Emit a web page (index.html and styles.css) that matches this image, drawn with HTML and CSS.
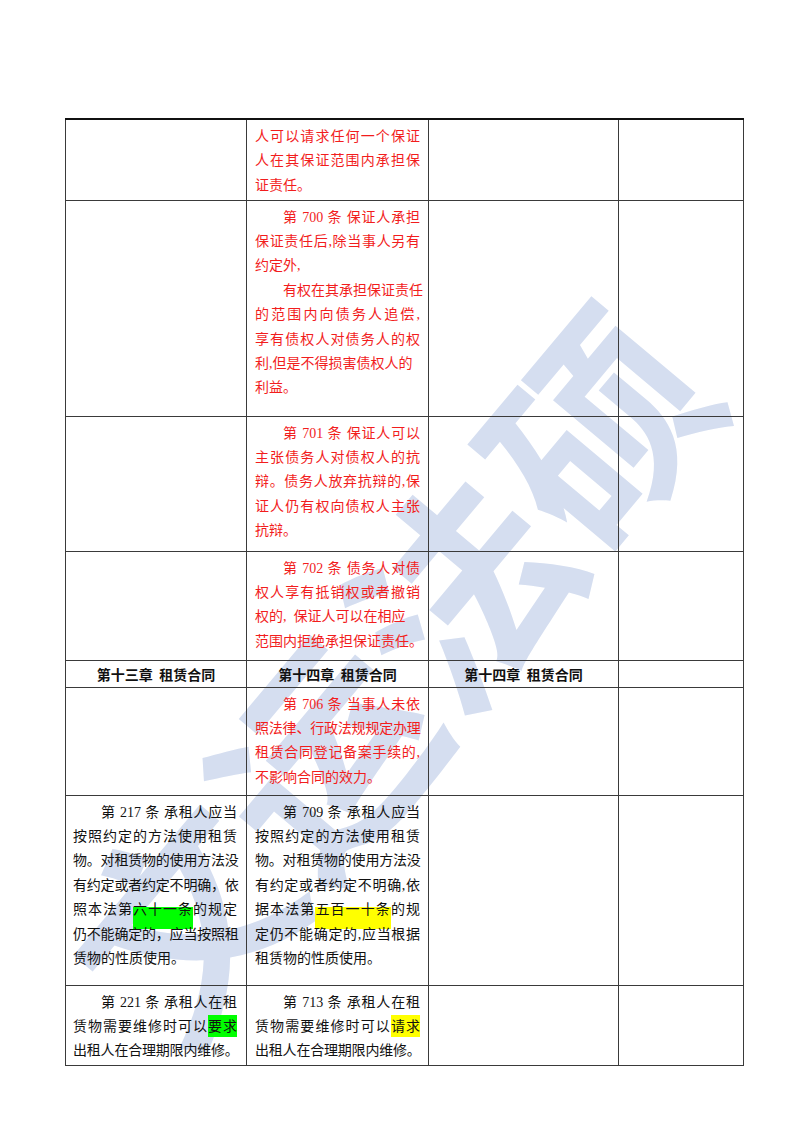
FILE: index.html
```html
<!DOCTYPE html>
<html lang="zh-CN">
<head>
<meta charset="utf-8">
<title>租赁合同对照表</title>
<link rel="stylesheet" href="styles.css">
</head>
<body>
<div class="page">
  <div class="watermark"><span>文</span><span>运</span><span>法</span><span>硕</span></div>
  <table class="cmp">
    <colgroup><col class="c1"><col class="c2"><col class="c3"><col class="c4"></colgroup>
    <tr class="r1">
      <td></td>
      <td class="red">
        <span class="ln">人可以请求任何一个保证</span>
        <span class="ln">人在其保证范围内承担保</span>
        <span class="ln end">证责任。</span>
      </td>
      <td></td><td></td>
    </tr>
    <tr class="r2">
      <td></td>
      <td class="red">
        <span class="ln ind">第 700 条 保证人承担</span>
        <span class="ln">保证责任后,除当事人另有</span>
        <span class="ln end">约定外,</span>
        <span class="ln ind">有权在其承担保证责任</span>
        <span class="ln">的范围内向债务人追偿,</span>
        <span class="ln">享有债权人对债务人的权</span>
        <span class="ln end">利,但是不得损害债权人的</span>
        <span class="ln end">利益。</span>
      </td>
      <td></td><td></td>
    </tr>
    <tr class="r3">
      <td></td>
      <td class="red">
        <span class="ln ind">第 701 条 保证人可以</span>
        <span class="ln">主张债务人对债权人的抗</span>
        <span class="ln">辩。债务人放弃抗辩的,保</span>
        <span class="ln">证人仍有权向债权人主张</span>
        <span class="ln end">抗辩。</span>
      </td>
      <td></td><td></td>
    </tr>
    <tr class="r4">
      <td></td>
      <td class="red">
        <span class="ln ind">第 702 条 债务人对债</span>
        <span class="ln">权人享有抵销权或者撤销</span>
        <span class="ln end">权的,&nbsp;&nbsp;保证人可以在相应</span>
        <span class="ln end">范围内拒绝承担保证责任。</span>
      </td>
      <td></td><td></td>
    </tr>
    <tr class="r5 head">
      <td>第十三章&nbsp;&nbsp;租赁合同</td>
      <td>第十四章&nbsp;&nbsp;租赁合同</td>
      <td>第十四章&nbsp;&nbsp;租赁合同</td>
      <td></td>
    </tr>
    <tr class="r6">
      <td></td>
      <td class="red">
        <span class="ln ind">第 706 条 当事人未依</span>
        <span class="ln tight">照法律、行政法规规定办理</span>
        <span class="ln">租赁合同登记备案手续的,</span>
        <span class="ln end">不影响合同的效力。</span>
      </td>
      <td></td><td></td>
    </tr>
    <tr class="r7">
      <td class="left">
        <span class="ln ind">第 217 条 承租人应当</span>
        <span class="ln">按照约定的方法使用租赁</span>
        <span class="ln tight">物。对租赁物的使用方法没</span>
        <span class="ln tight">有约定或者约定不明确，依</span>
        <span class="ln">照本法第<span class="hl green low">六十一条</span>的规定</span>
        <span class="ln tight">仍不能确定的，应当按照租</span>
        <span class="ln end">赁物的性质使用。</span>
      </td>
      <td>
        <span class="ln ind">第 709 条 承租人应当</span>
        <span class="ln">按照约定的方法使用租赁</span>
        <span class="ln tight">物。对租赁物的使用方法没</span>
        <span class="ln">有约定或者约定不明确,依</span>
        <span class="ln">据本法第<span class="hl yellow low">五百一十条</span>的规</span>
        <span class="ln">定仍不能确定的,应当根据</span>
        <span class="ln end">租赁物的性质使用。</span>
      </td>
      <td></td><td></td>
    </tr>
    <tr class="r8">
      <td class="left">
        <span class="ln ind">第 221 条 承租人在租</span>
        <span class="ln">赁物需要维修时可以<span class="hl green mid">要求</span></span>
        <span class="ln tight">出租人在合理期限内维修。</span>
      </td>
      <td>
        <span class="ln ind">第 713 条 承租人在租</span>
        <span class="ln">赁物需要维修时可以<span class="hl yellow mid">请求</span></span>
        <span class="ln tight">出租人在合理期限内维修。</span>
      </td>
      <td></td><td></td>
    </tr>
  </table>
</div>
</body>
</html>
```

FILE: styles.css
```css
html, body {
  margin: 0;
  padding: 0;
  background: #ffffff;
}

.page {
  position: relative;
  width: 800px;
  height: 1132px;
  box-sizing: border-box;
  padding: 118px 0 0 65px;
  font-family: "Liberation Serif", "Noto Sans CJK SC", serif;
  font-size: 14px;
  color: #111;
}

.watermark {
  position: absolute;
  left: 385px;
  top: 668px;
  display: flex;
  transform: translate(-50%, -50%) rotate(-50deg) scale(2);
  font-family: "Noto Sans CJK SC", sans-serif;
  font-weight: 700;
  font-size: 107.5px;
  line-height: 1;
  white-space: nowrap;
  color: rgb(213, 222, 240);
  z-index: 0;
}

.watermark span {
  display: block;
  width: 1em;
  height: 1em;
}

.cmp {
  position: relative;
  z-index: 1;
  border-collapse: collapse;
  table-layout: fixed;
  width: 678px;
}

.c1 { width: 181px; }
.c2 { width: 182px; }
.c3 { width: 190px; }
.c4 { width: 125px; }

.cmp td {
  border: 1px solid #3a3a3a;
  vertical-align: top;
  padding: 5px 8px 0 8px;
  line-height: 24.4px;
  overflow: visible;
}

.cmp td.left {
  padding-left: 7px;
  padding-right: 9px;
}

.r1 td { border-top: 2px solid #111; }

.r1 { height: 81px; }
.r2 { height: 216px; }
.r3 { height: 135px; }
.r4 { height: 109px; }
.r5 { height: 27px; }
.r6 { height: 108px; }
.r7 { height: 190px; }
.r8 { height: 80px; }

.red { color: #f21d1d; }

.ln {
  display: block;
  white-space: nowrap;
  text-align: justify;
  text-align-last: justify;
}

.ln.end {
  text-align-last: left;
}

.ln.ind {
  text-indent: 2em;
}

.ln.tight {
  letter-spacing: -0.2px;
}

.head td {
  vertical-align: middle;
  text-align: center;
  padding: 0;
  line-height: 20px;
  font-family: "Noto Sans CJK SC", sans-serif;
  font-weight: 700;
  font-size: 14px;
  color: #111;
}

.hl.low {
  padding: 0 0 12px;
}
.hl.mid {
  padding: 4px 0 3px;
}

.hl.green.mid { background: #00ff00; }
.hl.yellow.mid { background: #ffff00; }
.hl.green.low { background: linear-gradient(to bottom, transparent 5px, #00ff00 5px); }
.hl.yellow.low { background: linear-gradient(to bottom, transparent 5px, #ffff00 5px); }
```
